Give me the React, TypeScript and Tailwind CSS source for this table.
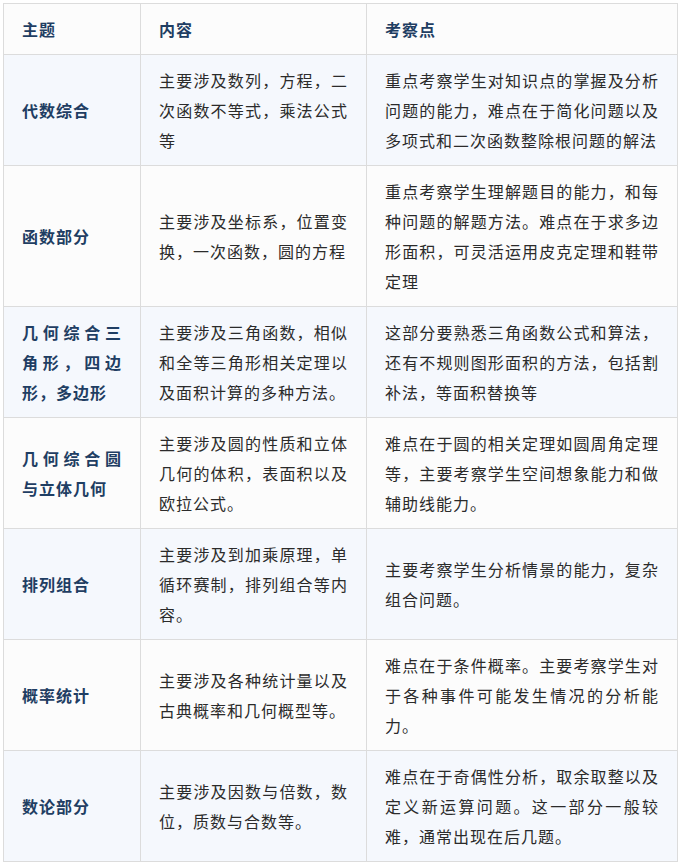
const rows: { topic: string; content: string; points: string }[] = [
  {
    topic: "代数综合",
    content: "主要涉及数列，方程，二次函数不等式，乘法公式等",
    points: "重点考察学生对知识点的掌握及分析问题的能力，难点在于简化问题以及多项式和二次函数整除根问题的解法",
  },
  {
    topic: "函数部分",
    content: "主要涉及坐标系，位置变换，一次函数，圆的方程",
    points: "重点考察学生理解题目的能力，和每种问题的解题方法。难点在于求多边形面积，可灵活运用皮克定理和鞋带定理",
  },
  {
    topic: "几何综合三角形，四边形，多边形",
    content: "主要涉及三角函数，相似和全等三角形相关定理以及面积计算的多种方法。",
    points: "这部分要熟悉三角函数公式和算法，还有不规则图形面积的方法，包括割补法，等面积替换等",
  },
  {
    topic: "几何综合圆与立体几何",
    content: "主要涉及圆的性质和立体几何的体积，表面积以及欧拉公式。",
    points: "难点在于圆的相关定理如圆周角定理等，主要考察学生空间想象能力和做辅助线能力。",
  },
  {
    topic: "排列组合",
    content: "主要涉及到加乘原理，单循环赛制，排列组合等内容。",
    points: "主要考察学生分析情景的能力，复杂组合问题。",
  },
  {
    topic: "概率统计",
    content: "主要涉及各种统计量以及古典概率和几何概型等。",
    points: "难点在于条件概率。主要考察学生对于各种事件可能发生情况的分析能力。",
  },
  {
    topic: "数论部分",
    content: "主要涉及因数与倍数，数位，质数与合数等。",
    points: "难点在于奇偶性分析，取余取整以及定义新运算问题。这一部分一般较难，通常出现在后几题。",
  },
];

const font = { fontFamily: '"Noto Sans CJK SC", "Noto Sans", sans-serif' };

export default function App() {
  return (
    <div className="min-h-[866px] w-[682px] bg-white pl-[3px] pt-[3px]" style={font}>
      <table className="w-[674px] table-fixed border-collapse text-[16px] leading-[30px] tracking-[1px]">
        <colgroup>
          <col className="w-[137px]" />
          <col className="w-[226px]" />
          <col className="w-[311px]" />
        </colgroup>
        <thead>
          <tr className="bg-[#fcfcfc]">
            <th className="border border-[#dcdcdc] px-[18px] py-[10px] text-left font-bold text-[#1f3e63]">主题</th>
            <th className="border border-[#dcdcdc] px-[18px] py-[10px] text-left font-bold text-[#1f3e63]">内容</th>
            <th className="border border-[#dcdcdc] px-[18px] py-[10px] text-left font-bold text-[#1f3e63]">考察点</th>
          </tr>
        </thead>
        <tbody>
          {rows.map((r, i) => (
            <tr key={r.topic} className={i % 2 === 0 ? "bg-[#f5f8fd]" : "bg-[#fcfcfc]"}>
              <td className="border border-[#dcdcdc] px-[18px] py-[10px] text-justify align-middle font-bold text-[#1f3e63]">
                {r.topic}
              </td>
              <td className="border border-[#dcdcdc] px-[18px] py-[10px] text-justify align-middle text-[#2b2b2b]">
                {r.content}
              </td>
              <td className="border border-[#dcdcdc] px-[18px] py-[10px] text-justify align-middle text-[#2b2b2b]">
                {r.points}
              </td>
            </tr>
          ))}
        </tbody>
      </table>
    </div>
  );
}
